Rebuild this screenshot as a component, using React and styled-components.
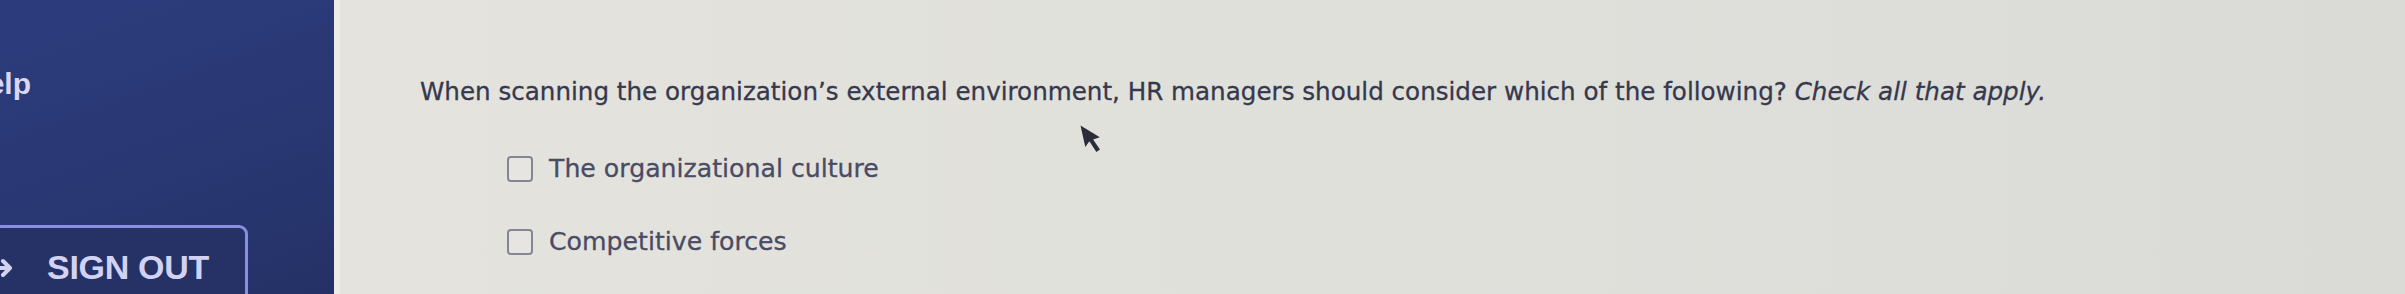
import React from "react";
import styled, { createGlobalStyle } from "styled-components";

const Global = createGlobalStyle`
  html, body { margin: 0; padding: 0; }
  body { width: 2405px; height: 294px; overflow: hidden; background: #dfdfd9; }
`;

const Page = styled.div`
  position: relative;
  display: flex;
  width: 2405px;
  height: 294px;
  overflow: hidden;
`;

const Sidebar = styled.aside`
  width: 334px;
  flex: none;
  display: flex;
  flex-direction: column;
  overflow: hidden;
  background: linear-gradient(160deg, #2c3b7c 0%, #293873 55%, #243166 100%);
`;

const HelpLink = styled.div`
  margin: 66px 0 0 -34px;
  font-family: "Liberation Sans", Arial, sans-serif;
  font-weight: 700;
  font-size: 30px;
  line-height: 36px;
  color: #d8d8f4;
  white-space: nowrap;
`;

const SignOut = styled.button`
  margin: 123px 0 0 -30px;
  width: 278px;
  height: 110px;
  flex: none;
  display: flex;
  align-items: flex-start;
  gap: 32px;
  padding: 20px 0 0 16px;
  box-sizing: border-box;
  background: #263266;
  border: 3px solid #8a8ee2;
  border-radius: 9px;
  font-family: "Liberation Sans", Arial, sans-serif;
  font-weight: 700;
  font-size: 34px;
  line-height: 38px;
  letter-spacing: -0.3px;
  color: #d2d3f3;
  text-align: left;
`;

const Strip = styled.div`
  width: 6px;
  flex: none;
  background: #efece6;
`;

const Main = styled.main`
  flex: 1;
  padding: 77px 0 0 80px;
  background: linear-gradient(90deg, #e4e3de 0%, #e0e0db 50%, #dadbd7 100%);
`;

const Question = styled.p`
  margin: 0;
  font-family: "DejaVu Sans", Verdana, sans-serif;
  font-size: 24.6px;
  line-height: 30px;
  color: #36384d;
  -webkit-text-stroke: 0.3px #36384d;
  white-space: nowrap;
`;

const Options = styled.div`
  display: flex;
  flex-direction: column;
  gap: 43px;
  margin: 47px 0 0 87px;
`;

const Option = styled.label`
  display: flex;
  align-items: center;
  gap: 16px;
  font-family: "DejaVu Sans", Verdana, sans-serif;
  font-size: 25.2px;
  line-height: 30px;
  color: #4a4b64;
  -webkit-text-stroke: 0.3px #4a4b64;
  white-space: nowrap;
`;

const Box = styled.span`
  width: 22px;
  height: 22px;
  flex: none;
  border: 2px solid #858694;
  border-radius: 4px;
  background: #e6e5e1;
`;

const Cursor = styled.svg`
  position: absolute;
  left: 1080px;
  top: 122px;
`;

function LogoutIcon() {
  return (
    <svg width="26" height="40" viewBox="0 0 26 40">
      <path d="M2 6 v5 M2 29 v5" stroke="#d2d3f3" strokeWidth="4" strokeLinecap="round" />
      <path d="M0 20 h20 M14 13 l7 7 -7 7" fill="none" stroke="#d2d3f3" strokeWidth="4" strokeLinecap="round" strokeLinejoin="round" />
    </svg>
  );
}

export default function App() {
  return (
    <>
      <Global />
      <Page>
        <Sidebar>
          <HelpLink>Help</HelpLink>
          <SignOut type="button">
            <LogoutIcon />
            <span>SIGN OUT</span>
          </SignOut>
        </Sidebar>
        <Strip />
        <Main>
          <Question>
            When scanning the organization’s external environment, HR managers should consider which of the following? <em>Check all that apply.</em>
          </Question>
          <Options>
            <Option>
              <Box />
              The organizational culture
            </Option>
            <Option>
              <Box />
              Competitive forces
            </Option>
          </Options>
        </Main>
        <Cursor width="24" height="34" viewBox="0 0 24 34">
          <path d="M3 2 L4 24 L9 19 L14 31 L18 29 L13 18 L20 17 Z" fill="#2c2d3a" transform="rotate(-10 10 17)" />
        </Cursor>
      </Page>
    </>
  );
}
